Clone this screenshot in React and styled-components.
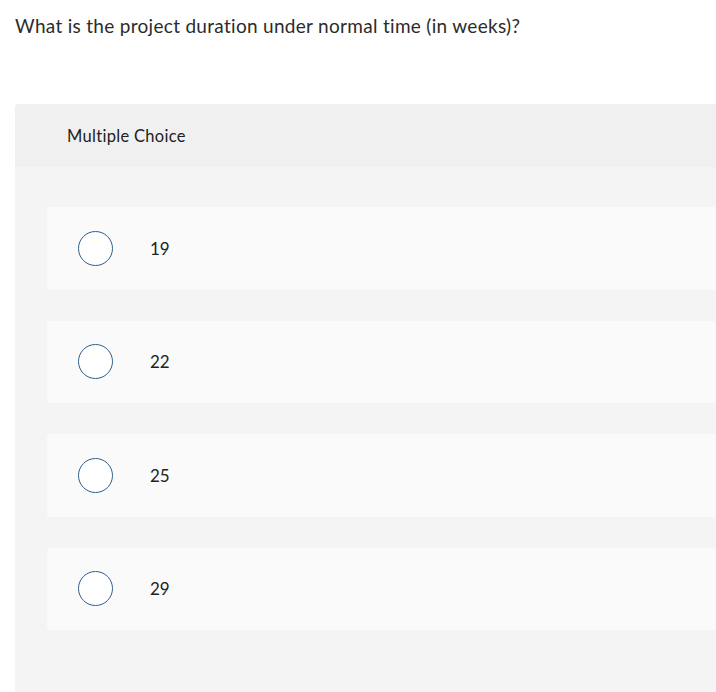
import React from 'react';
import styled, { createGlobalStyle } from 'styled-components';

const GlobalStyle = createGlobalStyle`
  html, body {
    margin: 0;
    padding: 0;
    background: #fff;
    overflow-x: hidden;
  }
  body {
    font-family: Lato, "Open Sans", Arial, sans-serif;
    color: #222;
  }
`

const options = ['19', '22', '25', '29']

const App = () => {
  return (
    <Page>
      <GlobalStyle />
      <Question>What is the project duration under normal time (in weeks)?</Question>
      <Panel>
        <PanelHeader>Multiple Choice</PanelHeader>
        <OptionList>
          {options.map(opt => (
            <Option key={opt}>
              <Radio />
              <OptionLabel>{opt}</OptionLabel>
            </Option>
          ))}
        </OptionList>
      </Panel>
    </Page>
  )
}

export default App

const Page = styled.div`
  padding-left: 15px;
`
const Question = styled.p`
  margin: 0;
  padding-top: 14px;
  height: 90px;
  font-size: 19px;
  line-height: 24px;
  letter-spacing: 0.3px;
  color: #2b2b2b;
`
const Panel = styled.section`
  display: flex;
  flex-direction: column;
  background-color: #f4f4f4;
  border-top-left-radius: 4px;
  min-height: 588px;
`
const PanelHeader = styled.header`
  display: flex;
  align-items: center;
  height: 63px;
  padding-left: 52px;
  background-color: #f0f0f0;
  border-top-left-radius: 4px;
  font-size: 16.5px;
  letter-spacing: 0.3px;
  color: #222;
`
const OptionList = styled.div`
  display: flex;
  flex-direction: column;
  gap: 31px;
  padding: 40px 0 40px 32px;
`
const Option = styled.label`
  display: flex;
  align-items: center;
  height: 82.5px;
  padding-left: 31px;
  background-color: #fafafa;
  border-radius: 4px 0 0 4px;
`
const Radio = styled.span`
  box-sizing: border-box;
  width: 35px;
  height: 35px;
  border: 1.5px solid #2e5f8e;
  border-radius: 50%;
  background-color: #fff;
`
const OptionLabel = styled.span`
  margin-left: 37px;
  font-size: 17px;
  color: #222;
`
